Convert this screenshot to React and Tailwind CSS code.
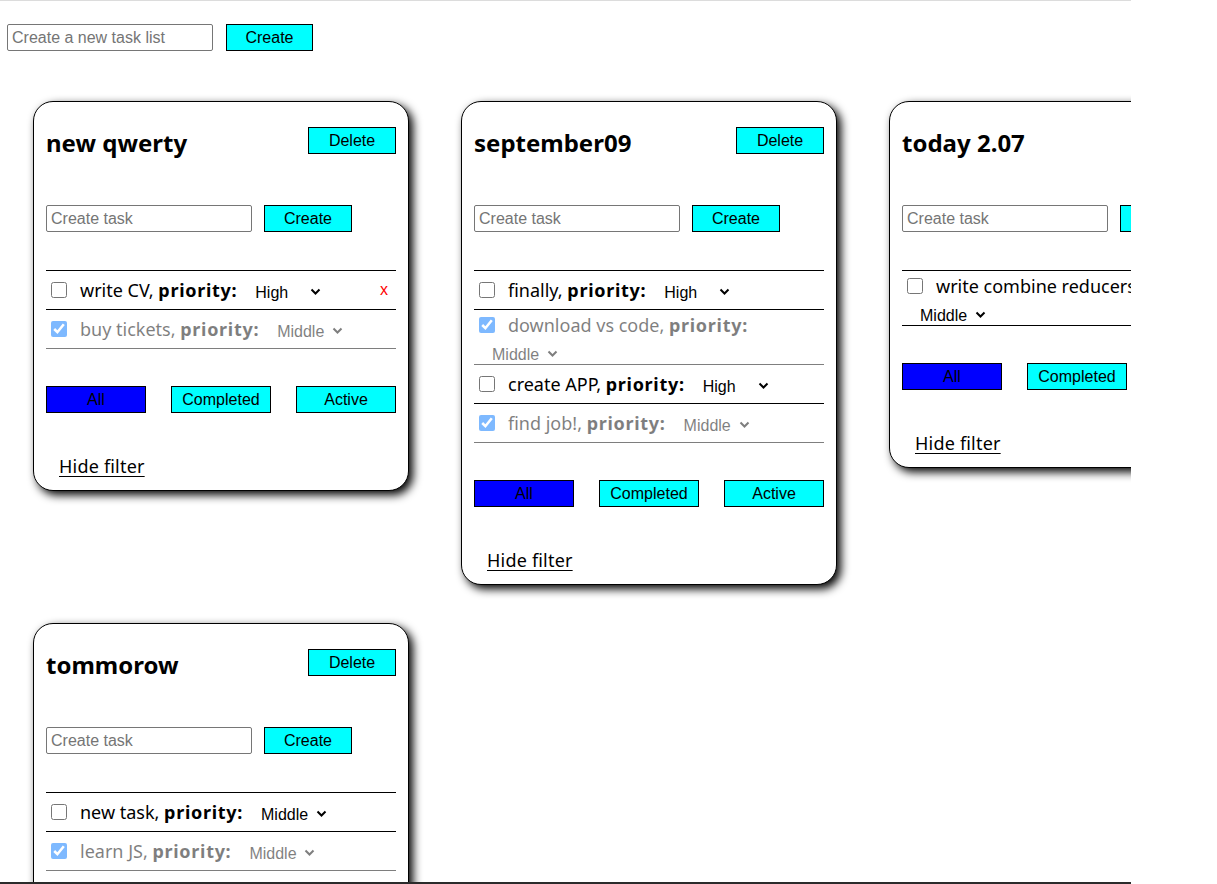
import { useState } from 'react';

const initialLists = [
  {
    id: 1,
    title: 'new qwerty',
    tasks: [
      { id: 11, title: 'write CV', priority: 'High', isDone: false },
      { id: 12, title: 'buy tickets', priority: 'Middle', isDone: true },
    ],
  },
  {
    id: 2,
    title: 'september09',
    tasks: [
      { id: 21, title: 'finally', priority: 'High', isDone: false },
      { id: 22, title: 'download vs code', priority: 'Middle', isDone: true },
      { id: 23, title: 'create APP', priority: 'High', isDone: false },
      { id: 24, title: 'find job!', priority: 'Middle', isDone: true },
    ],
  },
  {
    id: 3,
    title: 'today 2.07',
    tasks: [{ id: 31, title: 'write combine reducers', priority: 'Middle', isDone: false }],
  },
  {
    id: 4,
    title: 'tommorow',
    tasks: [
      { id: 41, title: 'new task', priority: 'Middle', isDone: false },
      { id: 42, title: 'learn JS', priority: 'Middle', isDone: true },
    ],
  },
];

const btn =
  "h-[27px] border border-black bg-[#00ffff] text-[16px] text-black font-['Liberation_Sans',Arial,sans-serif] leading-none";
const input =
  "h-[27px] w-[206px] rounded-[2px] border border-[#767676] pl-[4px] text-[16px] font-['Liberation_Sans',Arial,sans-serif] placeholder:text-[#757575] outline-none";

const Chevron = () => (
  <svg width="11" height="7" viewBox="0 0 11 7" className="pointer-events-none absolute right-[6px] top-[10px]">
    <polyline points="1.5,1.5 5.5,5.5 9.5,1.5" fill="none" stroke="currentColor" strokeWidth="2" />
  </svg>
);

const TaskItem = ({ task, hovered, onToggle, onPriority, onRemove }) => (
  <li
    className={`relative flex min-h-[39px] flex-wrap content-center items-center border-b border-black ${
      task.isDone ? 'opacity-50' : ''
    }`}
  >
    <input
      type="checkbox"
      checked={task.isDone}
      onChange={onToggle}
      className="ml-[5px] mr-[13px] h-[16px] w-[16px] accent-[#0075ff]"
    />
    <span className="h-[30px] text-[18px] leading-[31px] text-black">
      {task.title}, <b className="tracking-[0.7px]">priority:</b>
    </span>
    <span className="relative ml-[14px] inline-flex h-[24px] w-[76px] items-center text-black">
      <select
        value={task.priority}
        onChange={(e) => onPriority(e.target.value)}
        className="h-[24px] w-[76px] appearance-none border-0 bg-transparent pl-[4px] pt-[3px] text-[16px] font-['Liberation_Sans',Arial,sans-serif] outline-none"
      >
        <option>Low</option>
        <option>Middle</option>
        <option>High</option>
      </select>
      <Chevron />
    </span>
    {hovered && (
      <button
        onClick={onRemove}
        className="absolute right-[8px] top-0 flex h-[38px] items-center text-[16px] text-[#ff0000] font-['Liberation_Sans',Arial,sans-serif]"
      >
        x
      </button>
    )}
  </li>
);

const TodoList = ({ list, onDelete, onUpdate }) => {
  const [title, setTitle] = useState('');
  const [filter, setFilter] = useState('all');
  const [showFilter, setShowFilter] = useState(true);

  const addTask = () => {
    if (!title.trim()) return;
    onUpdate([...list.tasks, { id: Date.now(), title: title.trim(), priority: 'Middle', isDone: false }]);
    setTitle('');
  };

  const changeTask = (id, patch) => onUpdate(list.tasks.map((t) => (t.id === id ? { ...t, ...patch } : t)));

  const visible = list.tasks.filter((t) =>
    filter === 'completed' ? t.isDone : filter === 'active' ? !t.isDone : true
  );

  const filterBtn = (value, label) => (
    <button
      onClick={() => setFilter(value)}
      className={`${btn} w-[100px] ${filter === value ? 'bg-[#0000ff]' : ''}`}
    >
      {label}
    </button>
  );

  return (
    <div className="w-[376px] rounded-[20px] border border-black bg-white px-[12px] pb-[12px] pt-[25px] shadow-[4px_4px_10px_#000]">
      <div className="flex h-[32px] items-start justify-between">
        <h2 className="text-[24px] font-bold leading-[32px] text-black">{list.title}</h2>
        <button onClick={onDelete} className={`${btn} w-[88px]`}>
          Delete
        </button>
      </div>

      <div className="mt-[46px] flex">
        <input
          value={title}
          onChange={(e) => setTitle(e.target.value)}
          onKeyDown={(e) => e.key === 'Enter' && addTask()}
          placeholder="Create task"
          className={input}
        />
        <button onClick={addTask} className={`${btn} ml-[12px] w-[88px]`}>
          Create
        </button>
      </div>

      <ul className="mt-[38px] border-t border-black">
        {visible.map((task) => (
          <TaskItem
            key={task.id}
            task={task}
            hovered={task.id === 11}
            onToggle={() => changeTask(task.id, { isDone: !task.isDone })}
            onPriority={(priority) => changeTask(task.id, { priority })}
            onRemove={() => onUpdate(list.tasks.filter((t) => t.id !== task.id))}
          />
        ))}
      </ul>

      {showFilter && (
        <div className="mt-[37px] flex gap-[25px]">
          {filterBtn('all', 'All')}
          {filterBtn('completed', 'Completed')}
          {filterBtn('active', 'Active')}
        </div>
      )}

      <div className="mt-[41px] h-[24px] pl-[13px] text-[18px] leading-[24px]">
        <span
          onClick={() => setShowFilter(!showFilter)}
          className="cursor-pointer text-black underline underline-offset-[3px] tracking-[0.2px]"
        >
          {showFilter ? 'Hide filter' : 'Show filter'}
        </span>
      </div>
    </div>
  );
};

export default function App() {
  const [lists, setLists] = useState(initialLists);
  const [newTitle, setNewTitle] = useState('');

  const addList = () => {
    if (!newTitle.trim()) return;
    setLists([{ id: Date.now(), title: newTitle.trim(), tasks: [] }, ...lists]);
    setNewTitle('');
  };

  return (
    <div className="flex h-[884px] w-[1131px] flex-col bg-white font-['Noto_Sans',sans-serif]">
      <div className="flex-1 overflow-hidden border-t border-[#dcdcdc]">
        <div className="mt-[23px] flex pl-[7px]">
          <input
            value={newTitle}
            onChange={(e) => setNewTitle(e.target.value)}
            placeholder="Create a new task list"
            className={input}
          />
          <button onClick={addList} className={`${btn} ml-[13px] w-[87px]`}>
            Create
          </button>
        </div>

        <div className="mt-[50px] grid grid-cols-[repeat(3,376px)] items-start gap-x-[52px] gap-y-[38px] pl-[33px]">
          {lists.map((list) => (
            <TodoList
              key={list.id}
              list={list}
              onDelete={() => setLists(lists.filter((l) => l.id !== list.id))}
              onUpdate={(tasks) => setLists(lists.map((l) => (l.id === list.id ? { ...l, tasks } : l)))}
            />
          ))}
        </div>
      </div>
      <div className="h-[2px] bg-[#2b2b2b]" />
    </div>
  );
}
